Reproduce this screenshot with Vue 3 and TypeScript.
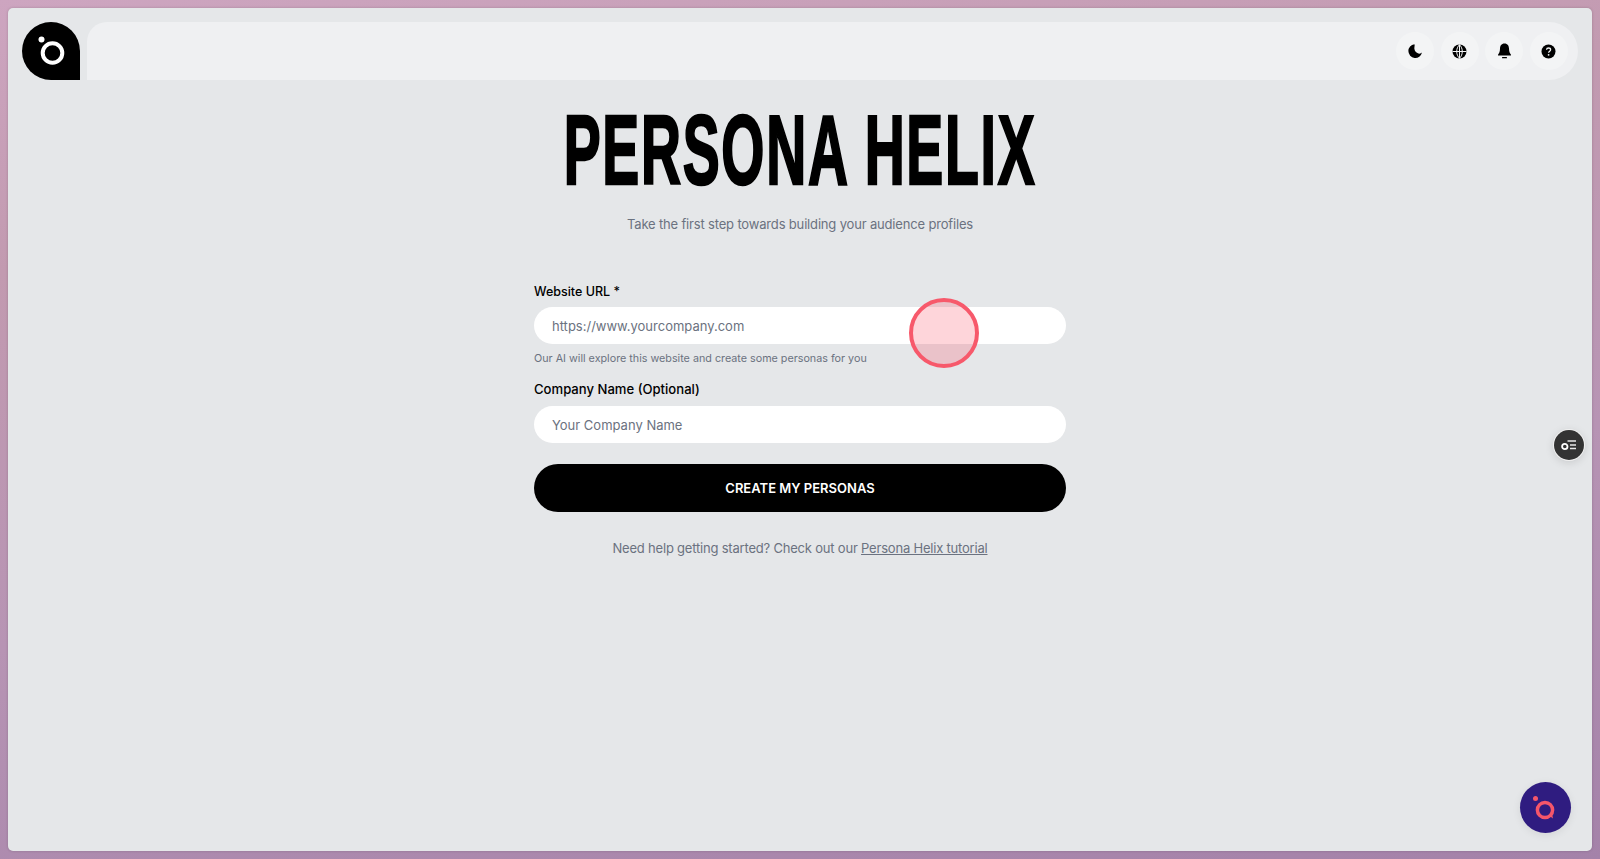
<script setup lang="ts">
const actions = ['moon', 'globe', 'bell', 'help']
</script>

<template>
  <div class="frame">
    <div class="page">
      <header class="top">
        <div class="logo">
          <svg width="58" height="58" viewBox="0 0 58 58">
            <circle cx="30.5" cy="31" r="9.8" fill="none" stroke="#fff" stroke-width="4" />
            <circle cx="19.5" cy="17.5" r="3" fill="#fff" />
          </svg>
        </div>
        <div class="bar">
          <button v-for="a in actions" :key="a" class="round" type="button" :aria-label="a">
            <svg v-if="a === 'moon'" width="16" height="16" viewBox="0 0 16 16">
              <path d="M7.4 1.2A6.9 6.9 0 1 0 15 9.6C13.9 10.7 12 11 10.4 10.1 8 8.8 7 6 7.4 4.2 7.5 3.2 7.9 2.2 7.4 1.2Z" fill="#000" />
            </svg>
            <svg v-else-if="a === 'globe'" width="15" height="15" viewBox="0 0 15 15">
              <circle cx="7.5" cy="7.5" r="7" fill="#000" />
              <path d="M7.5 .5V14.5M.5 7.5H14.5M7.5 .8C3.8 4 3.8 11 7.5 14.2M7.5 .8C11.2 4 11.2 11 7.5 14.2" fill="none" stroke="#f3f4f5" stroke-width="1" />
            </svg>
            <svg v-else-if="a === 'bell'" width="15" height="16" viewBox="0 0 15 16">
              <path d="M7.5 .5C4.4 .5 3 3 3 5.6 3 8.8 2.2 10.3 1 11.8 .8 12.2 1 12.6 1.5 12.6H13.5C14 12.6 14.2 12.2 14 11.8 12.8 10.3 12 8.8 12 5.6 12 3 10.6 .5 7.5 .5Z" fill="#000" />
              <rect x="5" y="14" width="5" height="1.3" rx=".6" fill="#000" />
            </svg>
            <svg v-else width="15" height="15" viewBox="0 0 15 15">
              <circle cx="7.5" cy="7.5" r="7" fill="#000" />
              <path d="M5.5 5.8C5.6 4.6 6.4 4 7.6 4 8.8 4 9.6 4.7 9.6 5.7 9.6 7.2 7.6 7.2 7.6 8.8" fill="none" stroke="#f3f4f5" stroke-width="1.3" />
              <circle cx="7.6" cy="10.8" r=".9" fill="#f3f4f5" />
            </svg>
          </button>
        </div>
      </header>

      <main class="main">
        <h1 class="title"><span>PERSONA HELIX</span></h1>
        <p class="sub">Take the first step towards building your audience profiles</p>

        <form class="form" @submit.prevent>
          <label class="label" for="url">Website URL *</label>
          <input id="url" class="field first" type="text" placeholder="https://www.yourcompany.com" />
          <p class="hint">Our AI will explore this website and create some personas for you</p>
          <label class="label second" for="company">Company Name (Optional)</label>
          <input id="company" class="field" type="text" placeholder="Your Company Name" />
          <button class="submit" type="submit">CREATE MY PERSONAS</button>
        </form>

        <p class="help">Need help getting started? Check out our <a href="#" class="link">Persona Helix tutorial</a></p>
      </main>

      <div class="side">
        <svg width="16" height="12" viewBox="0 0 16 12">
          <path d="M6.5 2H15M9 6H15M9 9.5H15" stroke="#e8e8e8" stroke-width="1.3" fill="none" />
          <circle cx="3.8" cy="7.5" r="2.7" fill="none" stroke="#fff" stroke-width="1.8" />
        </svg>
      </div>

      <div class="chat">
        <svg width="28" height="28" viewBox="0 0 28 28">
          <circle cx="14" cy="16" r="7.6" fill="none" stroke="#f5566a" stroke-width="3.5" />
          <path d="M18 21.5L22 24.5 21 19.5Z" fill="#f5566a" />
          <circle cx="4.5" cy="4.5" r="2.5" fill="#f5566a" />
        </svg>
      </div>

      <div class="pulse"></div>
    </div>
  </div>
</template>

<style>
html, body { margin: 0; height: 100%; overflow: hidden; }
</style>

<style scoped>
.frame {
  box-sizing: border-box;
  height: 100vh;
  padding: 8px;
  background: linear-gradient(172deg, #cda5c0 0%, #c29ab0 25%, #b794b4 60%, #a482a9 100%);
  font-family: Inter, "Liberation Sans", sans-serif;
}
.page {
  position: relative;
  box-sizing: border-box;
  height: 100%;
  padding: 14px 14px 0;
  background: #e5e7e9;
  border-radius: 5px;
  box-shadow: 0 0 3px rgba(0, 0, 0, .18);
  overflow: hidden;
}
.top {
  display: flex;
  gap: 7px;
  height: 58px;
}
.logo {
  width: 58px;
  height: 58px;
  flex: none;
  background: #000;
  border-radius: 29px 29px 0 29px;
}
.logo svg { display: block; }
.bar {
  flex: 1;
  display: flex;
  align-items: center;
  justify-content: flex-end;
  gap: 6.5px;
  padding-right: 10.5px;
  background: #eff0f2;
  border-radius: 20px 29px 29px 0;
}
.round {
  display: flex;
  align-items: center;
  justify-content: center;
  width: 38px;
  height: 38px;
  padding: 0;
  border: 0;
  border-radius: 50%;
  background: #f3f4f5;
}
.main {
  display: flex;
  flex-direction: column;
  align-items: center;
}
.title {
  margin: 18px 0 0;
  height: 104px;
  font-family: "Liberation Sans Narrow", "Liberation Sans", sans-serif;
  font-size: 99px;
  line-height: 104px;
  font-weight: 700;
  letter-spacing: 3px;
  color: #000;
  white-space: nowrap;
  -webkit-text-stroke: 2.5px #000;
}
.title span {
  display: inline-block;
  transform: scaleX(0.56);
}
.sub {
  margin: 12px 0 0;
  font-size: 13px;
  line-height: 20px;
  letter-spacing: -0.17px;
  color: #6b7280;
}
.form {
  width: 532px;
  margin-top: 48px;
  display: flex;
  flex-direction: column;
}
.label {
  font-size: 12.5px;
  line-height: 20px;
  font-weight: 500;
  color: #000;
}
.label.second { margin-top: 12px; font-size: 13.1px; }
.field {
  box-sizing: border-box;
  height: 37px;
  margin-top: 7px;
  padding: 0 18px;
  border: 0;
  border-radius: 19px;
  background: #fff;
  font-family: inherit;
  font-size: 13px;
  color: #374151;
  outline: none;
}
.field.first { margin-top: 5px; }
.field::placeholder { color: #6b7280; opacity: 1; }
.hint {
  margin: 7px 0 0;
  font-size: 10.75px;
  line-height: 16px;
  color: #6b7280;
}
.submit {
  height: 48px;
  margin-top: 21px;
  border: 0;
  border-radius: 24px;
  background: #000;
  color: #fff;
  font-family: inherit;
  font-size: 13px;
  font-weight: 600;
}
.help {
  margin: 26px 0 0;
  font-size: 13px;
  line-height: 20px;
  letter-spacing: -0.2px;
  color: #6b7280;
}
.link { color: #6b7280; text-decoration: underline; }
.side {
  position: absolute;
  left: 1546px;
  top: 422px;
  box-sizing: border-box;
  width: 30px;
  height: 30px;
  display: flex;
  align-items: center;
  justify-content: center;
  border-radius: 50%;
  background: #333;
  box-shadow: 0 0 0 1px #f0f0f0, 0 2px 10px rgba(0, 0, 0, .15);
}
.chat {
  position: absolute;
  left: 1511.5px;
  top: 774px;
  width: 51px;
  height: 51px;
  display: flex;
  align-items: center;
  justify-content: center;
  border-radius: 50%;
  background: #2f1c80;
  box-shadow: 0 2px 8px rgba(0, 0, 0, .08);
}
.pulse {
  position: absolute;
  left: 901px;
  top: 290px;
  box-sizing: border-box;
  width: 70px;
  height: 70px;
  border: 4px solid #f7596b;
  border-radius: 50%;
  background: rgba(250, 80, 100, .24);
}
</style>
